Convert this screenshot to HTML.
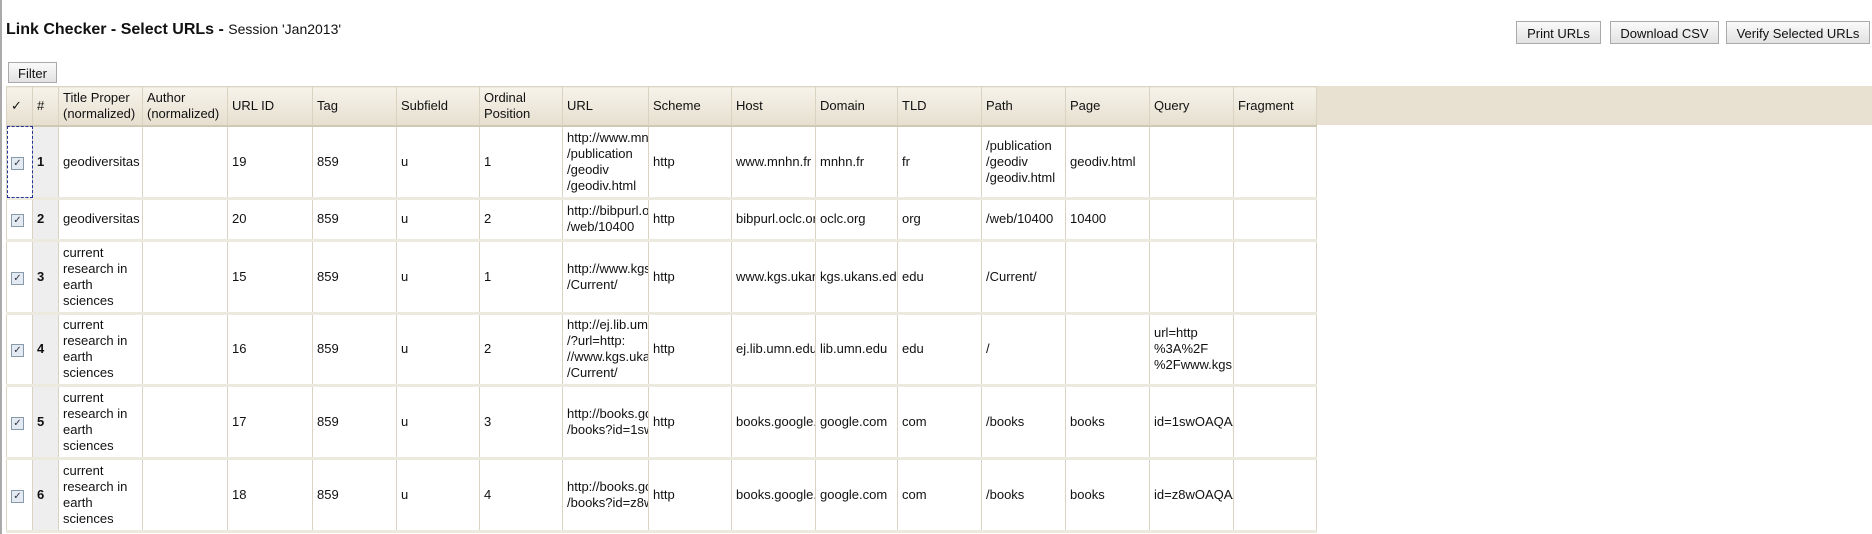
<!DOCTYPE html>
<html><head><style>
body{margin:0;width:1872px;height:534px;overflow:hidden;background:#fff;font-family:"Liberation Sans",Arial,sans-serif;font-size:13px;color:#111;position:relative}
.lb{position:absolute;left:0;top:0;width:2px;height:534px;background:#aaa}
h1{position:absolute;left:6px;top:21px;margin:0;font-size:16px;font-weight:bold}
h1 span{font-weight:normal;font-size:14px}
.btn{position:absolute;height:23px;top:21px;border:1px solid #aaa;background:linear-gradient(#fafafa,#e2e2e2);font-size:13px;line-height:23px;text-align:center;box-sizing:border-box}
.band{position:absolute;left:6px;right:0;top:86px;height:39px;background:#e8e1d1}
table{position:absolute;left:6px;top:86px;border-collapse:collapse;table-layout:fixed;width:1310px}
td,th{border:1px solid #d9d4c2;padding:0 4px;overflow:hidden;white-space:nowrap;vertical-align:middle;text-align:left;font-weight:normal;line-height:16px}
th{background:linear-gradient(#f6f3ea,#e6dfcf);height:38px;border-bottom:2px solid #cfc8b5}
tr.r td{border-bottom:3px solid #eceadf}
td.n{background:#eeeeee;font-weight:bold}
.cb{display:inline-block;width:11px;height:11px;border:1px solid #8899aa;background:#e4eaf2;font-size:10px;line-height:11px;text-align:center;color:#334}
</style></head><body>
<div class="lb"></div>
<h1>Link Checker - Select URLs - <span>Session 'Jan2013'</span></h1>
<div class="btn" style="left:1516px;width:85px">Print URLs</div>
<div class="btn" style="left:1610px;width:109px">Download CSV</div>
<div class="btn" style="left:1726px;width:144px">Verify Selected URLs</div>
<div class="btn" style="left:8px;top:62px;width:49px;height:21px;line-height:21px">Filter</div>
<div class="band"></div>
<table>
<colgroup><col style="width:26px"><col style="width:26px"><col style="width:84px"><col style="width:85px"><col style="width:85px"><col style="width:84px"><col style="width:83px"><col style="width:83px"><col style="width:86px"><col style="width:83px"><col style="width:84px"><col style="width:82px"><col style="width:84px"><col style="width:84px"><col style="width:84px"><col style="width:84px"><col style="width:83px"></colgroup>
<tr><th>✓</th><th>#</th><th>Title Proper<br>(normalized)</th><th>Author<br>(normalized)</th><th>URL ID</th><th>Tag</th><th>Subfield</th><th>Ordinal<br>Position</th><th>URL</th><th>Scheme</th><th>Host</th><th>Domain</th><th>TLD</th><th>Path</th><th>Page</th><th>Query</th><th>Fragment</th></tr>
<tr class="r" style="height:72px"><td style="outline:1px dashed #22339a;outline-offset:-1px"><span class="cb">✓</span></td><td class="n">1</td><td>geodiversitas</td><td></td><td>19</td><td>859</td><td>u</td><td>1</td><td>http://www.mnhn.fr<br>/publication<br>/geodiv<br>/geodiv.html</td><td>http</td><td>www.mnhn.fr</td><td>mnhn.fr</td><td>fr</td><td>/publication<br>/geodiv<br>/geodiv.html</td><td>geodiv.html</td><td></td><td></td></tr>
<tr class="r" style="height:42px"><td><span class="cb">✓</span></td><td class="n">2</td><td>geodiversitas</td><td></td><td>20</td><td>859</td><td>u</td><td>2</td><td>http://bibpurl.oclc.org<br>/web/10400</td><td>http</td><td>bibpurl.oclc.org</td><td>oclc.org</td><td>org</td><td>/web/10400</td><td>10400</td><td></td><td></td></tr>
<tr class="r" style="height:73px"><td><span class="cb">✓</span></td><td class="n">3</td><td>current<br>research in<br>earth<br>sciences</td><td></td><td>15</td><td>859</td><td>u</td><td>1</td><td>http://www.kgs.ukans.edu<br>/Current/</td><td>http</td><td>www.kgs.ukans.edu</td><td>kgs.ukans.edu</td><td>edu</td><td>/Current/</td><td></td><td></td><td></td></tr>
<tr class="r" style="height:72px"><td><span class="cb">✓</span></td><td class="n">4</td><td>current<br>research in<br>earth<br>sciences</td><td></td><td>16</td><td>859</td><td>u</td><td>2</td><td>http://ej.lib.umn.edu<br>/?url=http:<br>//www.kgs.ukans.edu<br>/Current/</td><td>http</td><td>ej.lib.umn.edu</td><td>lib.umn.edu</td><td>edu</td><td>/</td><td></td><td>url=http<br>%3A%2F<br>%2Fwww.kgs.ukans</td><td></td></tr>
<tr class="r" style="height:73px"><td><span class="cb">✓</span></td><td class="n">5</td><td>current<br>research in<br>earth<br>sciences</td><td></td><td>17</td><td>859</td><td>u</td><td>3</td><td>http://books.google.com<br>/books?id=1swOAQAA</td><td>http</td><td>books.google.com</td><td>google.com</td><td>com</td><td>/books</td><td>books</td><td>id=1swOAQAAMAAJ</td><td></td></tr>
<tr class="r" style="height:73px"><td><span class="cb">✓</span></td><td class="n">6</td><td>current<br>research in<br>earth<br>sciences</td><td></td><td>18</td><td>859</td><td>u</td><td>4</td><td>http://books.google.com<br>/books?id=z8wOAQAA</td><td>http</td><td>books.google.com</td><td>google.com</td><td>com</td><td>/books</td><td>books</td><td>id=z8wOAQAAMAAJ</td><td></td></tr>
</table>
</body></html>
